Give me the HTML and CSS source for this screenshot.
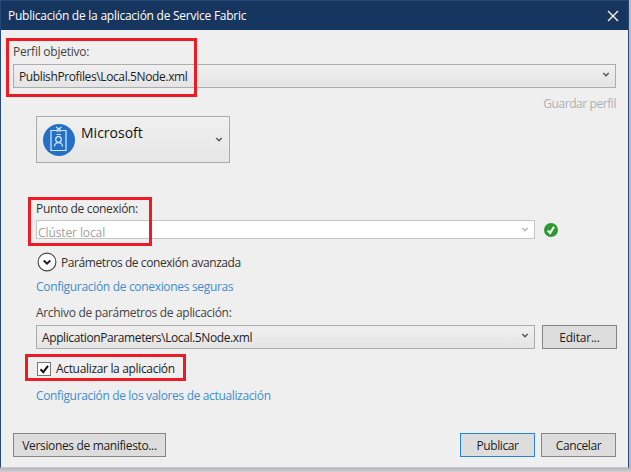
FILE: index.html
```html
<!DOCTYPE html>
<html lang="es">
<head>
<meta charset="utf-8">
<title>Publicación de la aplicación de Service Fabric</title>
<link rel="stylesheet" href="styles.css">
</head>
<body>
<div class="window">
  <header class="titlebar">
    <span class="title">Publicación de la aplicación de Service Fabric</span>
    <svg class="close" width="12" height="12" viewBox="0 0 12 12"><path d="M1 1L11 11M11 1L1 11"/></svg>
  </header>
  <main class="content">
    <div class="label t-profile">Perfil objetivo:</div>
    <div class="combo">
      <span class="t-publish">PublishProfiles\Local.5Node.xml</span>
      <svg class="chevron" width="8" height="6" viewBox="0 0 8 6"><path d="M1.3 1L4 3.7L6.7 1"/></svg>
    </div>
    <div class="save"><span class="t-save">Guardar perfil</span></div>
    <section class="details">
      <div class="account">
        <svg class="badge" width="32" height="32" viewBox="0 0 32 32">
          <circle cx="16" cy="16" r="16"/>
          <path d="M13 6.500H8V26.500H23V6.500H19M13 3L18.500 7M18.500 3L13 7M13 7H18.500M13.500 10.500H18"/>
          <circle class="head" cx="15.500" cy="15.500" r="2.800"/>
          <path d="M11.500 22.500C11.500 17.500 19.500 17.500 19.500 22.500"/>
        </svg>
        <span class="account-name">Microsoft</span>
        <svg class="chevron" width="8" height="6" viewBox="0 0 8 6"><path d="M1.3 1L4 3.7L6.7 1"/></svg>
      </div>
      <div class="label connection-label t-point">Punto de conexión:</div>
      <div class="row connection">
        <div class="combo disabled">
          <span class="t-cluster">Clúster local</span>
          <svg class="chevron" width="8" height="6" viewBox="0 0 8 6"><path d="M1.3 1L4 3.7L6.7 1"/></svg>
        </div>
        <svg class="valid" width="14" height="14" viewBox="0 0 14 14"><circle cx="7" cy="7" r="7"/><path d="M3.800 7.500L6.200 10L10 3.800"/></svg>
      </div>
      <div class="advanced">
        <svg class="expander" width="20" height="20" viewBox="0 0 20 20"><circle cx="10" cy="10" r="8.900"/><path d="M6.700 8.500L10 11.700L13.300 8.500"/></svg>
        <span class="t-advanced">Parámetros de conexión avanzada</span>
      </div>
      <div class="link t-secure">Configuración de conexiones seguras</div>
      <div class="label file-label t-file">Archivo de parámetros de aplicación:</div>
      <div class="row">
        <div class="combo">
          <span class="t-params">ApplicationParameters\Local.5Node.xml</span>
          <svg class="chevron" width="8" height="6" viewBox="0 0 8 6"><path d="M1.3 1L4 3.7L6.7 1"/></svg>
        </div>
        <div class="button"><span class="t-edit">Editar...</span></div>
      </div>
      <div class="upgrade">
        <svg class="checkbox" width="15" height="15" viewBox="0 0 15 15"><rect x="0.5" y="0.5" width="13" height="13"/><path d="M3.500 7.300L6.300 10.200L11 3.800"/></svg>
        <span class="t-upgrade">Actualizar la aplicación</span>
      </div>
      <div class="link t-values">Configuración de los valores de actualización</div>
    </section>
    <footer class="footer">
      <div class="button wide"><span class="t-versions">Versiones de manifiesto...</span></div>
      <div class="button primary"><span class="t-go">Publicar</span></div>
      <div class="button"><span class="t-cancel">Cancelar</span></div>
    </footer>
  </main>
  <div class="mark mark-profile"></div>
  <div class="mark mark-connection"></div>
  <div class="mark mark-upgrade"></div>
</div>
</body>
</html>
```
FILE: styles.css
```css
* { box-sizing: border-box; }
body {
  margin: 0;
  width: 631px;
  height: 472px;
  overflow: hidden;
  background: linear-gradient(#b9b9be 0 466px, #b5b5ba 468px, #d0d0d4 472px);
  font: 12px/16px "Open Sans", "Noto Sans", sans-serif;
  color: #1e1e1e;
  white-space: nowrap;
}
svg { display: block; flex: none; fill: none; }
.window {
  position: relative;
  width: 629px;
  height: 468px;
  background: #efefef;
  border: 1px solid #264a78;
  border-bottom-color: #c8c8c8;
}
.titlebar {
  height: 29px;
  display: flex;
  align-items: center;
  justify-content: space-between;
  padding: 0 9px 0 7px;
  background: #17365f;
  color: #fff;
}
.close { stroke: #fff; stroke-width: 1.3; }
.content { padding: 14px 12px 0; }
.label { height: 16px; color: #444; }
.combo {
  flex: 1;
  height: 24px;
  margin-top: 4px;
  padding: 1px 5px 0 5px;
  display: flex;
  align-items: center;
  justify-content: space-between;
  border: 1px solid #acacac;
  background: linear-gradient(#f0f0f0, #e4e4e4);
}
.chevron { stroke: #555; stroke-width: 1.5; margin-bottom: 4px; }
.save { display: flex; justify-content: flex-end; margin-top: 8px; color: #b0b0b0; }
.details { padding-left: 23px; }
.account {
  width: 194px;
  height: 47px;
  margin-top: 4px;
  display: flex;
  align-items: center;
  padding: 0 6px;
  border: 1px solid #acacac;
  background: linear-gradient(#f0f0f0, #e6e6e6);
}
.badge { stroke: #dbe9f8; stroke-width: 1.2; }
.badge circle { fill: #2470c8; stroke: none; }
.badge .head { fill: none; stroke: #dbe9f8; }
.account-name { flex: 1; margin: -13px 0 0 6px; font-size: 14px; color: #111; }
.account .chevron { margin: 0; }
.connection-label { margin-top: 38px; color: #333; }
.row { display: flex; width: 581px; gap: 7px; }
.row .combo { flex: none; width: 499px; }
.row .button { margin-top: 4px; }
.row .disabled { height: 19px; margin-top: 3px; background: #fff; border-color: #c6c6c6; color: #a0a0a0; padding: 6px 5px 0 1px; }
.disabled .chevron { stroke: #b5b5b5; margin-bottom: 6px; }
.valid { margin: 6px 0 0 2px; fill: #2c9a31; }
.valid path { fill: none; stroke: #fff; stroke-width: 2.100; }
.advanced { display: flex; align-items: center; gap: 4px; margin: 13px 0 0 1px; height: 20px; color: #333; }
.advanced span { padding-top: 2px; }
.expander { stroke: #444; stroke-width: 1.100; }
.expander circle { fill: #fff; }
.expander path { stroke: #222; stroke-width: 2; }
.link { margin-top: 7px; color: #3f8dcc; height: 16px; }
.file-label { margin-top: 10px; }
.button {
  width: 75px;
  height: 24px;
  display: flex;
  align-items: center;
  justify-content: center;
  padding-top: 2px;
  border: 1px solid #858585;
  background: #ddd;
}
.upgrade { display: flex; align-items: center; gap: 4px; height: 16px; margin: 12px 0 0 1px; color: #222; }
.checkbox { fill: #fff; stroke: #777; }
.checkbox path { fill: none; stroke: #111; stroke-width: 2; }
.upgrade + .link { margin-top: 11px; }
.footer { display: flex; gap: 6px; margin-top: 29px; }
.wide { width: 153px; margin-right: auto; }
.primary { border-color: #2784d8; }
.title, .t-profile { letter-spacing: -0.25px; }
.t-publish { letter-spacing: -0.38px; }
.t-save { letter-spacing: -0.43px; }
.t-point, .t-upgrade { letter-spacing: -0.33px; }
.t-cluster { letter-spacing: -0.1px; }
.t-advanced { letter-spacing: -0.42px; }
.t-secure, .t-file { letter-spacing: -0.32px; }
.t-params { letter-spacing: -0.4px; }
.t-values, .t-versions { letter-spacing: -0.35px; }
.t-edit { letter-spacing: -0.2px; }
.t-go, .t-cancel { letter-spacing: -0.42px; }
.mark { position: absolute; border: 3px solid #ed1c24; }
.mark-profile { left: 5px; top: 37px; width: 191px; height: 59px; }
.mark-connection { left: 27px; top: 196px; width: 124px; height: 49px; }
.mark-upgrade { left: 24px; top: 353px; width: 161px; height: 27px; }
```
